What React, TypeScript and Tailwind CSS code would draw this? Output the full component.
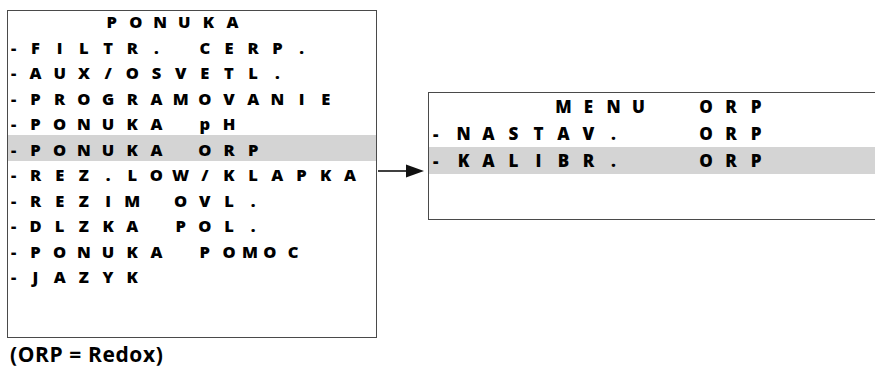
type Tok = string | { sp: number } | { c: string; w: number }

type Row = { dash: string; toks: Tok[]; hl?: boolean }

const leftRows: Row[] = [
  { dash: '', toks: [{ sp: 76.2 }, 'PONUKA'] },
  { dash: '-', toks: ['FILTR. CERP.'] },
  { dash: '-', toks: ['AUX/OSVETL.'] },
  { dash: '-', toks: ['PROGRAMOVANIE'] },
  { dash: '-', toks: ['PONUKA pH'] },
  { dash: '-', toks: ['PONUKA ORP'], hl: true },
  { dash: '-', toks: ['REZ.LOW/KLAPKA'] },
  { dash: '-', toks: ['REZIM OVL.'] },
  { dash: '-', toks: ['DLZKA POL.'] },
  { dash: '-', toks: ['PONUKA PO', { c: 'M', w: 17.6 }, { c: 'O', w: 22.4 }, 'C'] },
  { dash: '-', toks: ['JAZYK'] },
]

const rightRows: Row[] = [
  { dash: '', toks: [{ sp: 100 }, 'MENU', { sp: 42.5 }, 'ORP'] },
  { dash: '-', toks: ['NASTAV.', { sp: 67.5 }, 'ORP'] },
  { dash: '-', toks: ['KALIBR.', { sp: 67.5 }, 'ORP'], hl: true },
]

function Cells({ toks, cell }: { toks: Tok[]; cell: string }) {
  return (
    <>
      {toks.map((t, i) => {
        if (typeof t === 'string') {
          return t.split('').map((ch, j) => (
            <span key={`${i}-${j}`} className={`${cell} shrink-0 text-center`}>
              {ch === ' ' ? '\u00a0' : ch}
            </span>
          ))
        }
        if ('sp' in t) return <span key={i} className="shrink-0" style={{ width: t.sp }} />
        return (
          <span key={i} className="shrink-0 text-center" style={{ width: t.w }}>
            {t.c}
          </span>
        )
      })}
    </>
  )
}

export default function App() {
  return (
    <div className="w-[875px] h-[371px] overflow-hidden bg-white text-black font-['Open_Sans',sans-serif] font-extrabold">
      <div className="flex items-start pt-[10px] pl-[7px]">
        {/* Main menu */}
        <div className="shrink-0">
          <div className="w-[370px] h-[328px] border border-[#4a4a4a] overflow-hidden">
            <div className="-mt-[3.5px]">
              {leftRows.map((r, i) => (
                <div
                  key={i}
                  className={`flex items-center h-[25.5px] pt-[4.5px] text-[16.5px] leading-none ${r.hl ? 'bg-[#d4d4d4]' : ''}`}
                >
                  <span className="w-[15.4px] shrink-0 pl-[3px]">{r.dash}</span>
                  <Cells toks={r.toks} cell="w-[24.2px]" />
                </div>
              ))}
            </div>
          </div>
          <div className="mt-[5.5px] pl-[3px] text-[21px] leading-none font-bold tracking-[0.6px]">(ORP = Redox)</div>
        </div>

        {/* Arrow */}
        <svg width="51" height="20" viewBox="0 0 51 20" className="shrink-0 mt-[151px]">
          <line x1="1" y1="10" x2="32" y2="10" stroke="#111" strokeWidth="1.6" />
          <polygon points="29,3.5 47,10 29,16.5" fill="#111" />
        </svg>

        {/* ORP submenu */}
        <div className="shrink-0 w-[470px] h-[128px] mt-[82px] border border-[#4a4a4a]">
          {rightRows.map((r, i) => (
            <div
              key={i}
              className={`flex items-center h-[27px] text-[17px] leading-none ${r.hl ? 'bg-[#d4d4d4]' : ''}`}
            >
              <span className="w-[22px] shrink-0 pl-[4px]">{r.dash}</span>
              <Cells toks={r.toks} cell="w-[25px]" />
            </div>
          ))}
        </div>
      </div>
    </div>
  )
}
